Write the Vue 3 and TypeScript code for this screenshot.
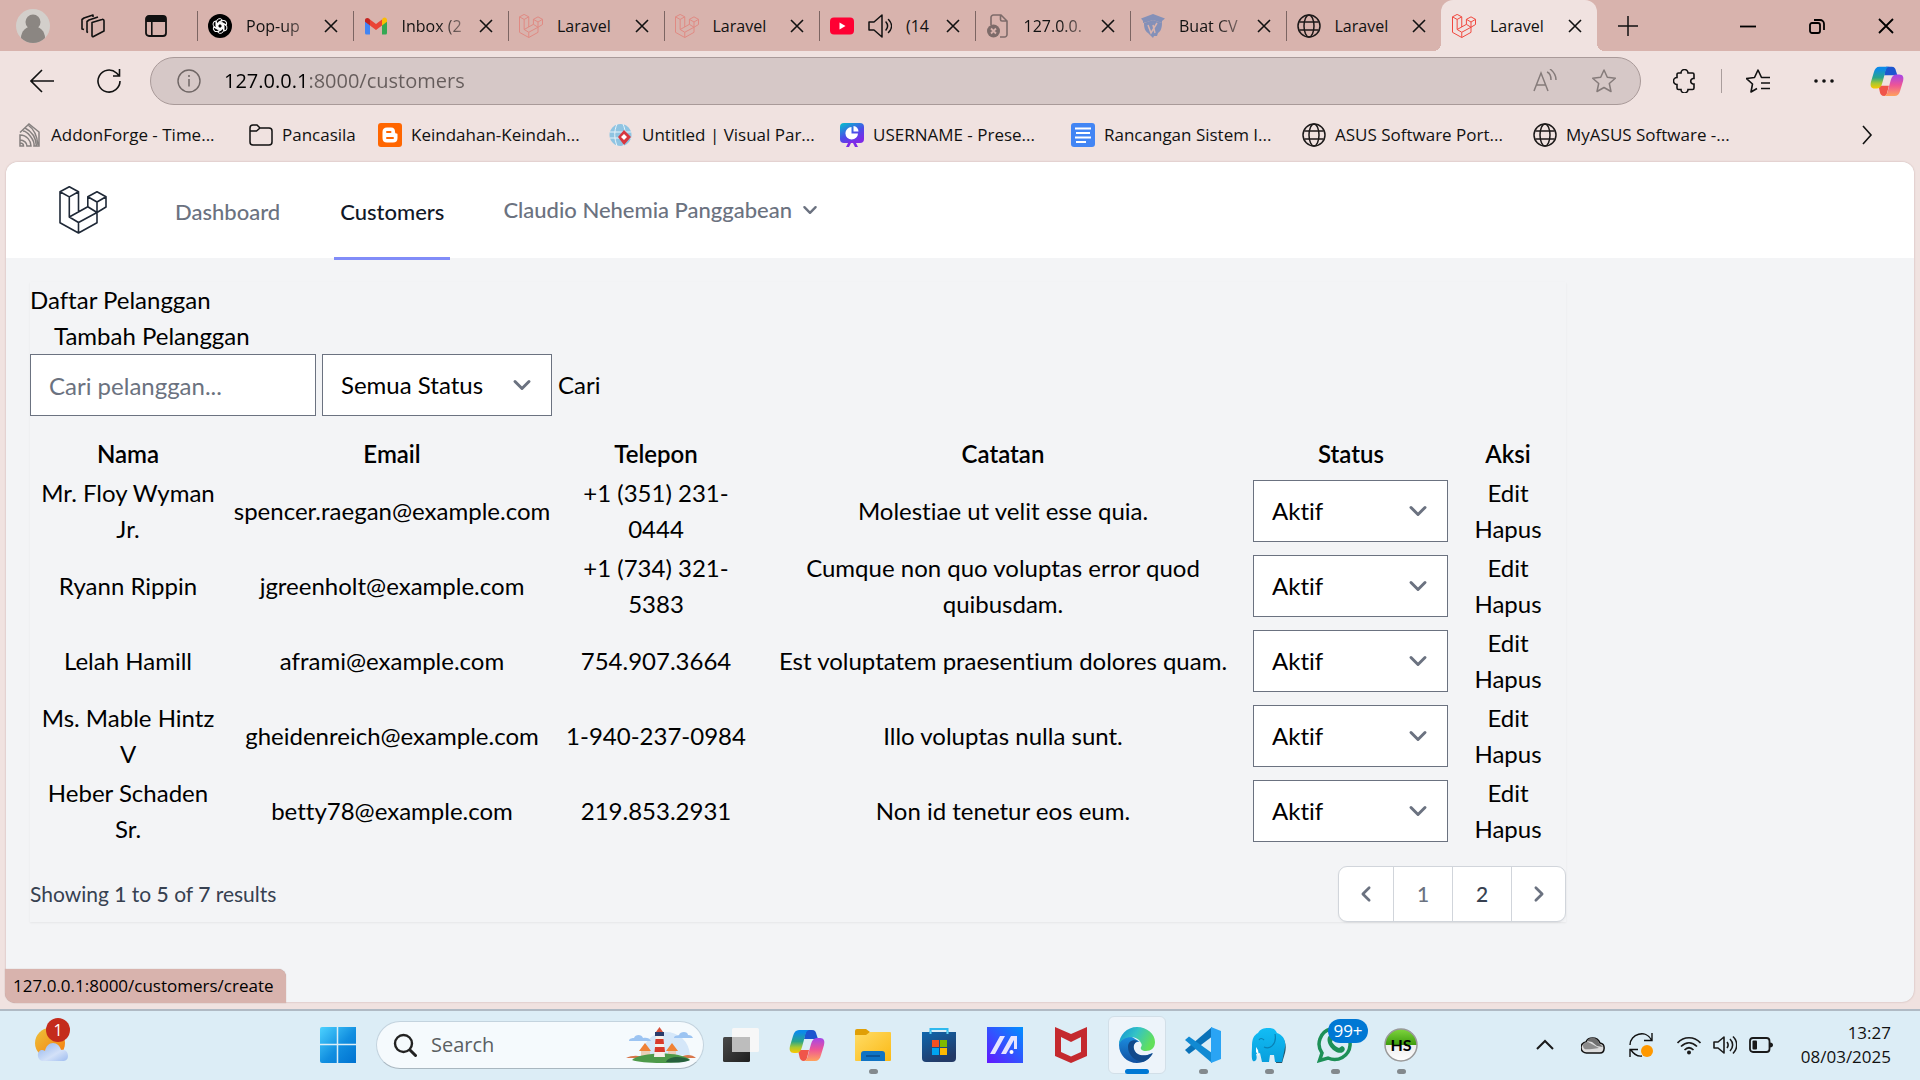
<script setup lang="ts">
import { ref } from 'vue'

interface Tab { icon: string; title: string; fade?: boolean; sound?: boolean; active?: boolean; dim?: boolean }
interface Bookmark { icon: string; title: string; folder?: boolean }
interface Customer { id: number; name: string; email: string; phone: string; note: string; status: string }
interface TaskApp { icon: string; name: string; running?: boolean; active?: boolean; badge?: string }

const tabs: Tab[] = [
  { icon: 'chatgpt', title: 'Pop-up', fade: true },
  { icon: 'gmail', title: 'Inbox (2', fade: true },
  { icon: 'laravel', title: 'Laravel', dim: true },
  { icon: 'laravel', title: 'Laravel', dim: true },
  { icon: 'youtube', title: '(14', sound: true },
  { icon: 'broken', title: '127.0.0.', fade: true },
  { icon: 'cv', title: 'Buat CV', fade: true },
  { icon: 'globe', title: 'Laravel' },
  { icon: 'laravel', title: 'Laravel', active: true },
]

const bookmarks: Bookmark[] = [
  { icon: 'addon', title: 'AddonForge - Time...' },
  { icon: 'folder', title: 'Pancasila', folder: true },
  { icon: 'blogger', title: 'Keindahan-Keindah...' },
  { icon: 'paradigm', title: 'Untitled | Visual Par...' },
  { icon: 'slides', title: 'USERNAME - Prese...' },
  { icon: 'docs', title: 'Rancangan Sistem I...' },
  { icon: 'globe', title: 'ASUS Software Port...' },
  { icon: 'globe', title: 'MyASUS Software -...' },
]

const customers = ref<Customer[]>([
  { id: 1, name: 'Mr. Floy Wyman Jr.', email: 'spencer.raegan@example.com', phone: '+1 (351) 231-0444', note: 'Molestiae ut velit esse quia.', status: 'Aktif' },
  { id: 2, name: 'Ryann Rippin', email: 'jgreenholt@example.com', phone: '+1 (734) 321-5383', note: 'Cumque non quo voluptas error quod quibusdam.', status: 'Aktif' },
  { id: 3, name: 'Lelah Hamill', email: 'aframi@example.com', phone: '754.907.3664', note: 'Est voluptatem praesentium dolores quam.', status: 'Aktif' },
  { id: 4, name: 'Ms. Mable Hintz V', email: 'gheidenreich@example.com', phone: '1-940-237-0984', note: 'Illo voluptas nulla sunt.', status: 'Aktif' },
  { id: 5, name: 'Heber Schaden Sr.', email: 'betty78@example.com', phone: '219.853.2931', note: 'Non id tenetur eos eum.', status: 'Aktif' },
])

const apps: TaskApp[] = [
  { icon: 'taskview', name: 'Task view' },
  { icon: 'copilot', name: 'Copilot' },
  { icon: 'explorer', name: 'File Explorer', running: true },
  { icon: 'store', name: 'Microsoft Store' },
  { icon: 'myasus', name: 'MyASUS' },
  { icon: 'mcafee', name: 'McAfee' },
  { icon: 'edge', name: 'Microsoft Edge', active: true },
  { icon: 'vscode', name: 'Visual Studio Code', running: true },
  { icon: 'elephant', name: 'Laragon', running: true },
  { icon: 'whatsapp', name: 'WhatsApp', running: true, badge: '99+' },
  { icon: 'hs', name: 'HS', running: true },
]

const address = ref('127.0.0.1:8000/customers')
const query = ref('')
const filter = ref('')
const taskSearch = ref('')
</script>

<template>
  <div class="screen">
    <svg class="sprite" aria-hidden="true">
      <defs>
        <linearGradient id="g-win" x1="0" y1="0" x2="1" y2="1"><stop offset="0" stop-color="#4cd2ff" /><stop offset=".55" stop-color="#118ee0" /><stop offset="1" stop-color="#0072d0" /></linearGradient>
        <linearGradient id="g-cop1" x1="0" y1="0" x2="0" y2="1"><stop offset=".1" stop-color="#0c8be8" /><stop offset=".5" stop-color="#2aa58a" /><stop offset=".75" stop-color="#a6c832" /><stop offset="1" stop-color="#fbc800" /></linearGradient>
        <linearGradient id="g-cop2" x1="0" y1="0" x2="0" y2="1"><stop offset="0" stop-color="#a445ea" /><stop offset=".5" stop-color="#ee5596" /><stop offset="1" stop-color="#ffa35c" /></linearGradient>
        <linearGradient id="g-fold" x1="0" y1="0" x2="1" y2="1"><stop offset="0" stop-color="#ffdc66" /><stop offset="1" stop-color="#fbb915" /></linearGradient>
        <linearGradient id="g-store" x1="0" y1="0" x2=".5" y2="1"><stop offset="0" stop-color="#0e66ae" /><stop offset="1" stop-color="#233a66" /></linearGradient>
        <linearGradient id="g-asus" x1="0" y1="1" x2="1" y2="0"><stop offset="0" stop-color="#6317ff" /><stop offset="1" stop-color="#0090ff" /></linearGradient>
        <linearGradient id="g-edge" x1="0" y1="0" x2="1" y2=".4"><stop offset="0" stop-color="#0f8fd5" /><stop offset=".5" stop-color="#34c3c6" /><stop offset="1" stop-color="#62e05b" /></linearGradient>
        <linearGradient id="g-edge2" x1="0" y1="0" x2="0" y2="1"><stop offset="0" stop-color="#1b8de0" /><stop offset="1" stop-color="#1150a0" /></linearGradient>
        <linearGradient id="g-ele" x1="0" y1="0" x2="0" y2="1"><stop offset="0" stop-color="#12bdf5" /><stop offset="1" stop-color="#089fdd" /></linearGradient>
        <linearGradient id="g-hs" x1="0" y1="0" x2="0" y2="1"><stop offset="0" stop-color="#7fd53f" /><stop offset=".5" stop-color="#3d9c0c" /><stop offset=".5" stop-color="#ececec" /><stop offset="1" stop-color="#fff" /></linearGradient>
        <linearGradient id="g-sun" x1="0" y1="0" x2="1" y2="1"><stop offset="0" stop-color="#edc23a" /><stop offset="1" stop-color="#f67a0c" /></linearGradient>
        <linearGradient id="g-cloud" x1="0" y1="0" x2="1" y2="1"><stop offset="0" stop-color="#8fb2ec" /><stop offset=".6" stop-color="#d3e1f8" /><stop offset="1" stop-color="#9ebcf0" /></linearGradient>
        <linearGradient id="g-slides" x1="0" y1="0" x2=".6" y2="1"><stop offset="0" stop-color="#00c4cc" /><stop offset=".6" stop-color="#4a4ee8" /><stop offset="1" stop-color="#7d2ae7" /></linearGradient>
        <linearGradient id="g-tv" x1="0" y1="0" x2="1" y2="1"><stop offset="0" stop-color="#4a4a4a" /><stop offset="1" stop-color="#1f1f1f" /></linearGradient>
      </defs>

      <symbol id="i-laravel" viewBox="0 0 48 48"><path fill="none" stroke="currentColor" stroke-linejoin="round" d="M1 5.7 10.3.8l9.2 4.9-9.2 5.2zV36.7L19.5 47 38 36.7V26.5M10.3 10.9V31l9.2 5.500V47M19.5 5.7V26M10.3 31l18.500-10.300 9.200 5.800-18.500 10M28.8 10.7 38 5.7l9 5-9 5.300zv10M47 10.7V21l-9 5.500V16" /></symbol>
      <symbol id="i-chatgpt" viewBox="0 0 24 24"><circle cx="12" cy="12" r="12" /><g fill="none" stroke="#fff" stroke-width="1"><path v-for="n in 6" :key="n" :transform="`rotate(${n * 60} 12 12)`" d="M8.500 13.800V7.500a3.200 3.200 0 0 1 5.800-1.500L10 8.500v4.800M12 8.900l2.700 1.500v3.200" /></g></symbol>
      <symbol id="i-gmail" viewBox="0 0 24 24"><path fill="#4285f4" d="M1 6.500V19a1.500 1.500 0 0 0 1.500 1.500H6v-10z" /><path fill="#34a853" d="M18 10.500v10h3.500A1.500 1.500 0 0 0 23 19V6.500z" /><path fill="#fbbc04" d="M18 5.500v6l5-3.800V6c0-2.500-2.500-3.300-4-2z" /><path fill="#ea4335" d="M6 11.500v-6l6 4.500 6-4.500v6L12 16z" /><path fill="#c5221f" d="M1 6v1.700l5 3.800v-6L5 4.500C3.500 3.300 1 4 1 6z" /></symbol>
      <symbol id="i-youtube" viewBox="0 0 24 24"><rect y="3.500" width="24" height="17" rx="4" fill="#f03" /><path fill="#fff" d="m9.500 8.500 6 3.500-6 3.500z" /></symbol>
      <symbol id="i-broken" viewBox="0 0 24 24"><g fill="none" stroke="#7d6b69" stroke-width="1.600"><path d="M5 11V3.500A2.500 2.500 0 0 1 7.500 1H15l6 6v13.500a2.500 2.500 0 0 1-2.500 2.500H14M14.500 1v4.500A1.500 1.500 0 0 0 16 7h5" /></g><circle cx="7.500" cy="17" r="6.500" fill="#7d6b69" /><path stroke="#d8b3ad" stroke-width="1.800" d="m5 14.500 5 5m0-5-5 5" /></symbol>
      <symbol id="i-cv" viewBox="0 0 24 24"><g fill="#8490b8"><path d="M12 0 24 4.500 21 7v2l-3-1-6-2-6 2-4 1V7L0 4.500z" /><path d="M3 9l9-3 9 3c0 6-2 9-4 10l-1 3h-3l-1 2-2-2-3-3c-3-2-4-5-4-10z" /></g><path d="m7 11 3 8 6-10M12 11l2 8" stroke="#d8b3ad" stroke-width="1.500" fill="none" /></symbol>
      <symbol id="i-globe" viewBox="0 0 24 24"><g fill="none" stroke="#1c1919" stroke-width="1.500"><circle cx="12" cy="12" r="11" /><ellipse cx="12" cy="12" rx="5" ry="11" /><path d="M2.300 8h19.400M2.300 16h19.400" /></g></symbol>
      <symbol id="i-addon" viewBox="0 0 24 24"><g fill="none" stroke="#85807f" stroke-width="1.500"><path d="M2 9.500 11 1l10 8v14h-5C17 17 9 8 5 8M2 12c7 0 11 6 11 11H9c0-3-3-6-7-6zM2 17v6h3.500c0-2-1-3-3.500-3M7 5c8 4 11 10 11.500 18M10 2c6 4 9 10 10 20" /></g></symbol>
      <symbol id="i-folder" viewBox="0 0 24 24"><path fill="none" stroke="#111" stroke-width="1.500" d="M1 5a3 3 0 0 1 3-3h4l3 3h9a3 3 0 0 1 3 3v11a3 3 0 0 1-3 3H4a3 3 0 0 1-3-3zm0 3h6.500L11 5" /></symbol>
      <symbol id="i-blogger" viewBox="0 0 24 24"><rect width="24" height="24" rx="3" fill="#ff6600" /><path fill="#fff" d="M9 4.500h4c3 0 4 2 4 4 0 1.500.5 2 1.500 2s1 .5 1 1.500v3c0 3-1.500 4.500-4.500 4.500H9c-3 0-4.500-1.500-4.500-4.500V9C4.500 6 6 4.500 9 4.500z" /><path stroke="#ff6600" stroke-width="2" stroke-linecap="round" d="M9 9h3.500M9 15h6" /></symbol>
      <symbol id="i-paradigm" viewBox="0 0 24 24"><circle cx="11.500" cy="12" r="11" fill="#8fc4e2" /><path fill="none" stroke="#e7f3fa" d="M1 9h21M1 15h21M8 1c-3 7-3 14 0 22M14 1c3 7 3 14 0 22" /><path fill="#d7373f" d="m15 7 7 7-7 8-6-8z" /><path fill="#fff" d="m15 11 3 3-3 3-3-3z" /></symbol>
      <symbol id="i-slides" viewBox="0 0 24 24"><rect width="24" height="20" rx="4" fill="url(#g-slides)" /><path d="m9 18-3 6h3l2-4h2l2 4h3l-3-6z" fill="#7d2ae7" /><path fill="#fff" d="M11.500 4v6.500H18A6.300 6.300 0 1 1 11.500 4z" /><path fill="#fff" d="M13.500 3a5.500 5.500 0 0 1 5 5.500h-5z" /></symbol>
      <symbol id="i-docs" viewBox="0 0 24 24"><rect width="24" height="24" rx="3" fill="#4285f4" /><path stroke="#fff" stroke-width="2.200" d="M4 5.500h16M5 10h14M4 14.500h16M5 19h10" /></symbol>
      <symbol id="i-speaker" viewBox="0 0 24 24"><path fill="none" stroke="currentColor" stroke-width="1.500" stroke-linejoin="round" stroke-linecap="round" d="M1 8v8h5l8 7V1L6 8zM18 8c2 2.500 2 5.500 0 8M20.500 5.500c4 4 4 9 0 13" /></symbol>
      <symbol id="i-close" viewBox="0 0 16 16"><path fill="none" stroke="#111" stroke-width="1.600" d="m2 2 12 12M14 2 2 14" /></symbol>
      <symbol id="i-chevron" viewBox="0 0 20 20"><path fill="none" stroke="currentColor" stroke-linecap="round" stroke-linejoin="round" d="m3 6.500 7 7 7-7" /></symbol>

      <symbol id="i-copilot" viewBox="0 0 36 32"><path fill="#1d55cf" d="M17 1h6c3 0 4 2 4.500 4.500L29 10H15z" /><path fill="#f0554a" d="M9 21h11l-2 8c-.5 2-2 3-3 3-3 0-4-2-4.500-4z" /><path fill="url(#g-cop1)" d="M10 1h11c-3 0-4 2-5 6l-3 11c-1 4-3 6-6 6H5c-4 0-5-3-4-7L4 7c1-4 3-6 6-6z" /><path fill="url(#g-cop2)" d="M26 32H14c3 0 4-2 5-6l3-11c1-4 3-6 6-6h3c4 0 5 3 4 7l-3 10c-1 4-3 6-6 6z" /></symbol>
      <symbol id="i-taskview" viewBox="0 0 36 36"><rect y="10" width="27" height="25" rx="1.500" fill="url(#g-tv)" /><rect x="9" y="1" width="27" height="24" rx="1.500" fill="#f7f7f7" /><path fill="#bdbdbd" d="M9 10h18v15H9z" /></symbol>
      <symbol id="i-explorer" viewBox="0 0 36 36"><path fill="#e09f06" d="M0 4a2 2 0 0 1 2-2h9l4 3-4 6H0z" /><path fill="url(#g-fold)" d="M0 8h11l4-3h20a1 1 0 0 1 1 1v27a1 1 0 0 1-1 1H1a1 1 0 0 1-1-1z" /><path fill="#0f73c4" d="M6 34V27a3 3 0 0 1 3-3h18a3 3 0 0 1 3 3v7z" /><path stroke="#0b4a8a" stroke-width="1.500" d="M11 29h14" /></symbol>
      <symbol id="i-store" viewBox="0 0 36 36"><path fill="none" stroke="#2fb9ee" stroke-width="2" d="M9.500 8V2h17v6" /><path fill="url(#g-store)" d="M1 5h34v26a4 4 0 0 1-4 4H5a4 4 0 0 1-4-4z" /><path stroke="#5fd3f6" stroke-width="2" d="M9.500 4v3m17-3v3" /><path fill="#f25022" d="M11 13h7v7h-7z" /><path fill="#7fba00" d="M19 13h7v7h-7z" /><path fill="#00a4ef" d="M11 21h7v7h-7z" /><path fill="#ffb900" d="M19 21h7v7h-7z" /></symbol>
      <symbol id="i-myasus" viewBox="0 0 36 36"><path fill="url(#g-asus)" d="M0 0h36v36H0z" /><path fill="#e6e4ff" d="M13 9h5L8 27H3zM24 9h6v13h-3V13l-8 14h-5z" /><circle cx="24.500" cy="25" r="2" fill="#fff" /></symbol>
      <symbol id="i-mcafee" viewBox="0 0 36 36"><path fill="#c4292e" d="m2 0 16 7 16-7v29l-16 7-16-7zM8 10v15l10 4.500L28 25V10l-10 5z" fill-rule="evenodd" /></symbol>
      <symbol id="i-edge" viewBox="0 0 36 36"><path fill="url(#g-edge2)" d="M0 18C0 10 7 9 13 10l8 5c-5-1-8 3-6 8 2 6 10 8 18 3-2 6-8 10-15 10C8 36 0 28 0 18z" /><path fill="#114a8b" d="M9 20c0 8 7 14 14 15 5-1 9-5 11-9-8 4-17 3-19-4-1-4 1-7 4-8-6-2-10 1-10 6z" /><path fill="url(#g-edge)" d="M0 18C0 8 8 0 18 0s18 7 18 15c0 6-4 9-9 9-4 0-6-2-5-4 1-1 1-3 0-4C19 8 3 8 0 18z" /></symbol>
      <symbol id="i-vscode" viewBox="0 0 36 36"><path fill="#0a72b8" d="m27 0-.5 10L4 27 0 23z" /><path fill="#118ad3" d="M4 9.500 27 26v10L0 13z" /><path fill="#2aa4f4" d="m26 0 10 4v28l-10 4z" /></symbol>
      <symbol id="i-elephant" viewBox="0 0 36 36"><path fill="#26566a" d="M28 9c6 2 8 9 6 17l-3 10h-6z" /><path fill="url(#g-ele)" d="M1 18c0-6 2-10 6-12 2-4 6-5 10-5 5 0 7 1 9 5 6 2 9 7 8 14l-3 15h-7l-1-7h-4l-1 7h-7l-2-9-4 1c2 6-1 8-3 7-2-3-1-8-1-16z" /><path fill="none" stroke="#0981b5" stroke-width="1.200" d="M8 13c1-2 3-2 5 0M13 20c6 3 13-3 11-13" /><path fill="#fff" d="m5 20 2 3 1 6-3-4z" /></symbol>
      <symbol id="i-whatsapp" viewBox="0 0 36 36"><path fill="none" stroke="#1d9057" stroke-width="3.500" d="M2.500 33.500 5 26a15.500 15.500 0 1 1 6 5z" /><path fill="#1d9057" d="M11 10c2-3 5-1 5 2l-1 3c2 3 4 5 7 6l3-2c3 1 4 4 1 6-6 4-18-7-15-15z" /></symbol>
      <symbol id="i-hs" viewBox="0 0 36 36"><circle cx="18" cy="18" r="16" fill="url(#g-hs)" stroke="#999" stroke-width="1.500" /></symbol>
    </svg>

    <header class="browser-top">
      <div class="tabstrip">
        <button class="plain profile" aria-label="Profile"><svg viewBox="0 0 34 34" width="34" height="34"><circle cx="17" cy="17" r="17" fill="#d3cfcb" /><circle cx="17" cy="13" r="7.500" fill="#8b8682" /><path d="M5 29a12 12 0 0 1 24 0 17 17 0 0 1-24 0z" fill="#8b8682" /></svg></button>
        <button class="plain workspaces" aria-label="Workspaces"><svg viewBox="0 0 24 24" width="24" height="24" fill="none" stroke="#111" stroke-width="1.600" stroke-linejoin="round"><path d="M11 8.500 21 5.500a1.500 1.500 0 0 1 2 1.500v10l-10.500 5.500a1 1 0 0 1-1.500-1z M7 18.500l-1-.5V7.500L8 6l9-3M3 15.500 1 15V5.500L3 4l9-3v2" /></svg></button>
        <button class="plain tabmenu" aria-label="Tab actions"><svg viewBox="0 0 22 22" width="22" height="22"><rect x="1" y="1" width="20" height="20" rx="3" fill="none" stroke="#111" stroke-width="1.800" /><path d="M1 2h20v5H1zM6 7h1.600v14H6z" fill="#111" /></svg></button>
        <div class="tabs">
          <div v-for="(t, i) in tabs" :key="i" class="tab" :class="{ active: t.active }">
            <svg class="i24" :class="{ red: t.icon === 'laravel', dim: t.dim }"><use :href="'#i-' + t.icon" /></svg>
            <svg v-if="t.sound" class="i24 sound"><use href="#i-speaker" /></svg>
            <span class="tab-title" :class="{ fade: t.fade }">{{ t.title }}</span>
            <button class="plain" :aria-label="'Close ' + t.title"><svg class="i16"><use href="#i-close" /></svg></button>
          </div>
        </div>
        <button class="plain newtab" aria-label="New tab"><svg viewBox="0 0 22 22" width="22" height="22"><path d="M11 1v20M1 11h20" stroke="#111" stroke-width="1.500" /></svg></button>
        <div class="window-buttons">
          <button class="plain" aria-label="Minimize"><svg viewBox="0 0 16 16" width="16" height="16"><path d="M0 8.500h16" stroke="#000" stroke-width="1.800" /></svg></button>
          <button class="plain" aria-label="Restore"><svg viewBox="0 0 16 16" width="16" height="16" fill="none" stroke="#000" stroke-width="1.800"><rect x="1" y="5" width="10" height="10" rx="2" /><path d="M5 2h6a4 4 0 0 1 4 4v6" /></svg></button>
          <button class="plain" aria-label="Close window"><svg viewBox="0 0 16 16" width="16" height="16"><path d="m1 1 14 14M15 1 1 15" stroke="#000" stroke-width="1.800" /></svg></button>
        </div>
      </div>

      <div class="toolbar">
        <button class="plain tool" aria-label="Back"><svg viewBox="0 0 24 24" width="24" height="24"><path d="M24 12H1M12 1 1 12l11 11" fill="none" stroke="#111" stroke-width="1.600" /></svg></button>
        <button class="plain tool" aria-label="Refresh"><svg viewBox="0 0 24 24" width="24" height="24"><path d="M23 12a11 11 0 1 1-3.500-8L22 6.500M22.500 0v7H16" fill="none" stroke="#111" stroke-width="1.600" /></svg></button>
        <div class="omnibox">
          <svg viewBox="0 0 24 24" width="24" height="24"><circle cx="12" cy="12" r="11" fill="none" stroke="#6f6665" stroke-width="1.400" /><path d="M12 10v7.500M12 6v2" stroke="#6f6665" stroke-width="1.500" /></svg>
          <input v-model="address" class="address" type="text" aria-label="Address" />
          <button class="plain" aria-label="Read aloud"><svg viewBox="0 0 24 24" width="24" height="24" fill="none" stroke="#857b7a" stroke-width="1.500"><path d="M1 22 8 4l7 18M3.500 16h9M14 3c3 1 4 4 4 8M17 0c4 3 6 7 6 11" /></svg></button>
          <button class="plain" aria-label="Add to favorites"><svg viewBox="0 0 24 24" width="24" height="24"><path d="m12 1 3.300 7.300 8 .9-6 5.300 1.700 8L12 18.500 5 22.500l1.700-8-6-5.300 8-.9z" fill="none" stroke="#857b7a" stroke-width="1.500" stroke-linejoin="round" /></svg></button>
        </div>
        <div class="tools">
          <button class="plain" aria-label="Extensions"><svg viewBox="0 0 24 24" width="24" height="24"><path d="M8 4a3.500 3.500 0 0 1 7 0h4.500A1.500 1.500 0 0 1 21 5.500V9.500h-1a2.800 2.800 0 0 0 0 5.500h1v4a1.500 1.500 0 0 1-1.500 1.500H15a3.500 3.500 0 0 1-7 0H5.500A1.500 1.500 0 0 1 4 19v-3.500a3.500 3.500 0 0 1 0-7v-3A1.500 1.500 0 0 1 5.500 4z" fill="none" stroke="#111" stroke-width="1.600" /></svg></button>
          <span class="divider"></span>
          <button class="plain" aria-label="Favorites"><svg viewBox="0 0 24 24" width="24" height="24" fill="none" stroke="#111" stroke-width="1.600" stroke-linejoin="round"><path d="M24 8.500h-8.500L12 1 8.500 8.500l-8 1 6 5.500L5 23l6-3.500M15 14h9M15 19.500h9" /></svg></button>
          <button class="plain" aria-label="Settings and more"><svg viewBox="0 0 24 24" width="24" height="24" fill="#111"><circle cx="4" cy="12" r="1.800" /><circle cx="12" cy="12" r="1.800" /><circle cx="20" cy="12" r="1.800" /></svg></button>
          <button class="plain" aria-label="Copilot"><svg width="34" height="32"><use href="#i-copilot" /></svg></button>
        </div>
      </div>

      <nav class="bookmarks" aria-label="Favorites bar">
        <a v-for="b in bookmarks" :key="b.title" href="#" class="bookmark" :class="{ folder: b.folder }">
          <svg class="i24"><use :href="'#i-' + b.icon" /></svg><span>{{ b.title }}</span>
        </a>
        <button class="plain more" aria-label="More favorites"><svg viewBox="0 0 12 20" width="12" height="20"><path d="m2 1 8 9-8 9" fill="none" stroke="#111" stroke-width="1.600" /></svg></button>
      </nav>
    </header>

    <div class="viewport">
      <div class="page">
        <nav class="site-nav">
          <a href="#" class="brand" aria-label="Home"><svg width="48" height="48"><use href="#i-laravel" /></svg></a>
          <a href="#" class="nav-link">Dashboard</a>
          <a href="#" class="nav-link selected">Customers</a>
          <button class="plain user">Claudio Nehemia Panggabean <svg class="user-chevron"><use href="#i-chevron" /></svg></button>
        </nav>

        <main class="content">
          <h1>Daftar Pelanggan</h1>
          <a href="#" class="add">Tambah Pelanggan</a>
          <form class="filters" @submit.prevent>
            <input v-model="query" type="text" class="field" placeholder="Cari pelanggan..." aria-label="Cari pelanggan" />
            <span class="select-wrap filter-select">
              <select v-model="filter" class="field" aria-label="Semua Status"><option value="">Semua Status</option><option>Aktif</option></select>
              <svg><use href="#i-chevron" /></svg>
            </span>
            <button class="plain">Cari</button>
          </form>

          <table>
            <colgroup><col class="c-name" /><col class="c-email" /><col class="c-phone" /><col /><col class="c-status" /><col class="c-action" /></colgroup>
            <thead><tr><th>Nama</th><th>Email</th><th>Telepon</th><th>Catatan</th><th>Status</th><th>Aksi</th></tr></thead>
            <tbody>
              <tr v-for="c in customers" :key="c.id">
                <td class="narrow">{{ c.name }}</td>
                <td>{{ c.email }}</td>
                <td class="narrow">{{ c.phone }}</td>
                <td>{{ c.note }}</td>
                <td>
                  <span class="select-wrap">
                    <select v-model="c.status" class="field" :aria-label="'Status ' + c.name"><option>Aktif</option></select>
                    <svg><use href="#i-chevron" /></svg>
                  </span>
                </td>
                <td><a href="#">Edit</a><button class="plain delete">Hapus</button></td>
              </tr>
            </tbody>
          </table>

          <div class="pager">
            <p>Showing <b>1</b> to <b>5</b> of <b>7</b> results</p>
            <nav class="pages" aria-label="Pagination">
              <a href="#" class="arrow prev" aria-label="Previous"><svg><use href="#i-chevron" /></svg></a>
              <a href="#" class="now">1</a>
              <a href="#">2</a>
              <a href="#" class="arrow next" aria-label="Next"><svg><use href="#i-chevron" /></svg></a>
            </nav>
          </div>
        </main>
      </div>
      <div class="link-hint">127.0.0.1:8000/customers/create</div>
    </div>

    <footer class="taskbar">
      <button class="plain weather" aria-label="Weather">
        <svg viewBox="0 0 36 36" width="36" height="36"><circle cx="17" cy="16" r="15" fill="url(#g-sun)" /><path d="M9 34a6 6 0 0 1-1-11c2 0 3 0 4 1 1-5 4-8 8-8s7 3 8 7c5-1 7 3 7 6 0 4-3 5-5 5z" fill="url(#g-cloud)" /></svg>
        <span class="count">1</span>
      </button>
      <button class="plain start" aria-label="Start"><svg viewBox="0 0 36 36" width="36" height="36" fill="url(#g-win)"><path d="M2 0h34v36H2a2 2 0 0 1-2-2V2a2 2 0 0 1 2-2z" /><path d="M17.500 0v36M0 17.500h36" stroke="#dcedf6" stroke-width="1.500" /></svg></button>
      <label class="search">
        <svg viewBox="0 0 24 24" width="24" height="24"><circle cx="10.500" cy="10.500" r="8.500" fill="none" stroke="#222" stroke-width="2.400" /><path d="m17 17 5.500 5.500" stroke="#222" stroke-width="3" stroke-linecap="round" /></svg>
        <input v-model="taskSearch" type="text" placeholder="Search" aria-label="Search" />
        <svg viewBox="0 0 70 36" width="70" height="36">
          <path d="M16 30a22 22 0 1 1 48-2z" fill="#d5e7f9" />
          <path d="M3 14c0-3 4-3 5-3 1-4 8-4 9 0 3-1 7 0 8 3zM48 11c0-3 4-2 5-3 1-4 9-4 9 0 3 0 4 1 5 3z" fill="#9cc4f2" />
          <path d="M0 31c6-3 14-3 18 0zM54 31c4-4 12-4 16 0z" fill="#d8764a" />
          <path d="M13 24l6-8 6 8zM40 24l6-8 6 8z" fill="#f08236" /><path d="M15 24h9v5h-9zM42 24h8v5h-8z" fill="#e9cfb9" />
          <path d="M6 33c8-8 48-9 58 0-10 4-48 4-58 0z" fill="#4e9a4a" /><path d="M40 35c2-5 14-7 24-2-6 3-16 3-24 2z" fill="#27613c" />
          <path d="M30 8h7l2 22H28z" fill="#f6efe9" /><path d="M29.500 12h8l.5 5h-9zM29 20h9.500l.5 5H28.500z" fill="#d8392b" /><path d="M29 5h9v4h-9z" fill="#2a3b6b" /><path d="m30 5 3.500-5L37 5z" fill="#d8513b" />
        </svg>
      </label>
      <button v-for="a in apps" :key="a.icon" class="plain app" :class="{ running: a.running, current: a.active }" :aria-label="a.name">
        <svg class="app-icon"><use :href="'#i-' + a.icon" /></svg>
        <span v-if="a.icon === 'hs'" class="hs-text">HS</span>
        <span v-if="a.badge" class="badge">{{ a.badge }}</span>
      </button>
      <div class="tray">
        <button class="plain" aria-label="Show hidden icons"><svg viewBox="0 0 24 24" width="24" height="24"><path d="m4 16 8-8 8 8" fill="none" stroke="#1a1a1a" stroke-width="2" /></svg></button>
        <button class="plain" aria-label="OneDrive"><svg viewBox="0 0 24 24" width="24" height="24"><path d="M6 20a5.500 5.500 0 0 1-1-11c2-5 11-6 14 1 6 1 5 10 0 10z" fill="#dcdcdc" stroke="#111" stroke-width="1.500" /><path d="M2 12c1-3 4-4 7-2l9 5-7 1c-4 0-9 2-9-4z" fill="#8c8c8c" /><path d="M6 8c3-5 10-4 12 2l4 4-6-1-5-4z" fill="#6f6f6f" /></svg></button>
        <button class="plain" aria-label="Update"><svg viewBox="0 0 24 24" width="24" height="24"><path d="M1 12C1 1 17-4 22.500 7M23 0v7.500h-8M13 23c-6 1-9-3-11-6M1 24v-7.500h8" fill="none" stroke="#111" stroke-width="1.400" /><circle cx="18" cy="18" r="6" fill="#ff9800" /></svg></button>
        <button class="plain status" aria-label="Network, volume and battery">
          <svg viewBox="0 0 24 24" width="24" height="24"><g fill="none" stroke="#1a1a1a" stroke-width="1.700"><path d="M.5 10C7 3 17 3 23.500 10M4 13.500c5-5 11-5 16 0M7.500 17c3-3 6-3 9 0" /></g><circle cx="12" cy="19.500" r="2" fill="#1a1a1a" /></svg>
          <svg viewBox="0 0 24 24" width="24" height="24" fill="none" stroke="#1a1a1a" stroke-width="1.600" stroke-linejoin="round"><path d="M1 9v6h4l6 5V4L5 9zM14 9c1.500 2 1.500 4 0 6M17 6c3.500 3.500 3.500 8.500 0 12M20 3.500c5 5 5 12 0 17" /></svg>
          <svg viewBox="0 0 24 24" width="24" height="24"><rect x="1" y="5" width="19.500" height="14" rx="3" fill="none" stroke="#1a1a1a" stroke-width="1.800" /><rect x="3.500" y="7.500" width="4.500" height="9" rx="1" fill="#1a1a1a" /><path d="M21 9.500c4 0 4 5 0 5z" fill="#1a1a1a" /></svg>
        </button>
        <time class="clock"><span>13:27</span><span>08/03/2025</span></time>
      </div>
    </footer>
  </div>
</template>

<style>
body { margin: 0; }
</style>

<style scoped>
* { box-sizing: border-box; }
.screen { display: flex; flex-direction: column; min-height: 100vh; background: #f0e2e0; font: 17px/24px "Open Sans", "Noto Sans", sans-serif; color: #111; }
.sprite { position: absolute; width: 0; height: 0; }
svg { display: block; flex: none; }
a { color: inherit; text-decoration: none; }
.plain { display: flex; align-items: center; justify-content: center; padding: 0; border: 0; background: none; font: inherit; color: inherit; }
.i24 { width: 24px; height: 24px; }
.i16 { width: 16px; height: 16px; }

.tabstrip { display: flex; align-items: center; height: 51px; background: #d8b3ad; font-size: 16px; }
.profile { margin-left: 16px; }
.workspaces { margin-left: 31px; }
.tabmenu { margin-left: 40px; }
.tabs { display: flex; flex: 0 1 1400px; min-width: 0; align-self: stretch; margin-left: 30px; }
.tab { position: relative; display: flex; flex: 1; align-items: center; min-width: 0; padding: 0 14px 0 11px; }
.tab::before { content: ""; position: absolute; left: 0; top: 11px; width: 1px; height: 30px; background: #7c6562; }
.tab .i24 { stroke-width: 2px; }
.tab .red { color: #f0483f; }
.tab .dim { color: #e08a83; }
.tab .sound { margin-left: 14px; color: #111; }
.tab-title { flex: 1; min-width: 0; margin: 0 2px 0 14px; overflow: hidden; white-space: nowrap; }
.tab-title.fade { margin-right: 6px; mask-image: linear-gradient(90deg, #000 50%, rgba(0, 0, 0, .2)); }
.tab.active { flex: none; width: 156px; background: #f0e2e0; border-radius: 12px 12px 0 0; }
.tab.active::before, .tab.active::after { top: auto; bottom: 0; width: 8px; height: 8px; }
.tab.active::before { left: -8px; background: radial-gradient(circle at 0 0, transparent 8px, #f0e2e0 8px); }
.tab.active::after { content: ""; position: absolute; right: -8px; background: radial-gradient(circle at 100% 0, transparent 8px, #f0e2e0 8px); }
.newtab { margin-left: 20px; }
.window-buttons { display: flex; margin-left: auto; }
.window-buttons .plain { width: 69px; height: 48px; }

.toolbar { display: flex; align-items: center; height: 60px; padding-left: 8px; }
.tool { width: 67px; height: 48px; }
.omnibox { display: flex; align-items: center; flex: 1; height: 48px; margin-left: 8px; padding: 0 24px 0 26px; gap: 35px; background: #d6c8c7; border: 1px solid #a99a99; border-radius: 24px; }
.address { flex: 1; min-width: 0; margin-left: -12px; padding: 0; border: 0; outline: 0; font: 20px/28px "Open Sans", "Noto Sans", sans-serif; color: transparent; background: linear-gradient(90deg, #000 83px, #655c5b 83px); background-clip: text; }
.tools { display: flex; align-items: center; padding-left: 32px; padding-right: 16px; }
.divider { width: 1px; height: 24px; margin: 0 24px; background: #a99d9c; }
.tools .plain + .plain { margin-left: 42px; }
.tools .plain:last-child { margin-left: 34px; }

.bookmarks { display: flex; align-items: center; gap: 30px; height: 48px; padding: 0 47px 0 18px; }
.bookmark { display: flex; align-items: center; gap: 9px; width: 201px; white-space: nowrap; }
.bookmark.folder { width: 99px; }
.more { margin-left: auto; }

.viewport { position: relative; display: flex; flex: 1; padding: 3px 6px 7px; }
.page { flex: 1; border-radius: 12px; overflow: hidden; background: #f3f4f6; box-shadow: 0 0 2px #c3a9a6; font: 24px/36px Lato, "Open Sans", sans-serif; font-variant-ligatures: none; color: #000; }
.site-nav { display: flex; height: 97px; padding-left: 53px; background: #fff; border-bottom: 1px solid #f3f4f6; font-size: 22px; line-height: 30px; font-weight: 500; color: #6b7280; }
.brand { align-self: center; margin-right: 62px; color: #1f2937; stroke-width: 1.600px; }
.nav-link { display: flex; align-items: center; height: 98px; padding: 4px 6px 0; margin-right: 48px; border-bottom: 3px solid transparent; z-index: 1; }
.nav-link.selected { color: #111827; border-color: #818cf8; }
.user { gap: 10px; padding-left: 5px; }
.user-chevron { width: 16px; height: 16px; stroke-width: 3px; }

.content { max-width: 1536px; margin: 23px 24px 0; box-shadow: 0 1px 2px rgba(0, 0, 0, .06); }
h1 { margin: 0; font: inherit; }
.add { display: block; width: max-content; margin-left: 24px; }
.filters { display: flex; gap: 6px; margin-bottom: 18px; }
.field { width: 100%; height: 62px; padding: 0 18px; border: 1px solid #6b7280; border-radius: 0; outline: 0; background: #fff; font: inherit; color: #000; appearance: none; }
.filters > .field { width: 286px; }
.field::placeholder { color: #6b7280; opacity: 1; }
.select-wrap { position: relative; display: block; margin-right: 1px; }
.filter-select { width: 230px; margin-right: 0; }
.select-wrap svg { position: absolute; right: 20px; top: 21px; width: 20px; height: 20px; color: #6b7280; stroke-width: 3px; pointer-events: none; }
table { width: 100%; table-layout: fixed; border-collapse: collapse; text-align: center; }
th { height: 39px; padding: 0; font-weight: 600; }
td { height: 75px; padding: 0 1px; }
td.narrow { padding: 0 6px; }
.c-name, .c-phone { width: 196px; }
.c-email { width: 332px; }
.c-status { width: 198px; }
.c-action { width: 116px; }
.delete { width: 100%; }
.pager { display: flex; justify-content: space-between; align-items: center; margin-top: 18px; font-size: 21px; line-height: 30px; color: #374151; }
.pager p { margin: 0; }
.pager b { font-weight: 500; }
.pages { display: flex; height: 56px; background: #fff; border: 1px solid #d1d5db; border-radius: 9px; box-shadow: 0 1px 2px rgba(0, 0, 0, .06); font-weight: 500; }
.pages a { display: flex; align-items: center; justify-content: center; width: 59px; }
.pages a + a { border-left: 1px solid #d1d5db; }
.pages .arrow { width: 54px; color: #6b7280; }
.pages .now { color: #6b7280; }
.arrow svg { width: 18px; height: 18px; stroke-width: 3px; }
.prev svg { transform: rotate(90deg); }
.next svg { transform: rotate(-90deg); }
.link-hint { position: absolute; left: 5px; bottom: 6px; height: 34px; padding: 0 12px 0 8px; line-height: 34px; background: #d8b3ad; border-radius: 0 8px 0 10px; box-shadow: 0 0 1px #a98f8c; white-space: nowrap; color: #000; }

.taskbar { display: flex; align-items: center; height: 71px; padding-bottom: 2px; border-top: 2px solid #b0bac4; background: #dcedf6; }
.weather { position: relative; margin-left: 31px; width: 40px; height: 40px; }
.count { position: absolute; left: 15px; top: -7px; width: 24px; height: 24px; border-radius: 12px; background: #c42b1c; color: #fff; font-size: 16px; }
.start { margin-left: 249px; }
.search { display: flex; align-items: center; width: 328px; height: 48px; margin: 0 4px 0 20px; padding: 0 7px 0 16px; border: 1px solid #c3d3de; border-bottom-color: #a9b7c0; border-radius: 24px; background: #f5fafd; }
.search input { flex: 1; min-width: 0; margin-left: 14px; padding: 0; border: 0; outline: 0; background: none; font: 20px/28px "Open Sans", "Noto Sans", sans-serif; }
.search input::placeholder { color: #5a5f62; opacity: 1; }
.app { position: relative; flex: none; width: 66px; height: 58px; }
.app.current::before { content: ""; position: absolute; left: 4px; right: 4px; top: 0; bottom: 0; border: 1px solid #d2dfe8; border-radius: 6px; background: #edf4fa; }
.app-icon { position: relative; width: 36px; height: 36px; }
.app.running::after, .app.current::after { content: ""; position: absolute; bottom: 0; left: 50%; width: 9px; height: 5px; margin-left: -4px; border-radius: 3px; background: #83898d; }
.app.current::after { width: 24px; margin-left: -12px; background: #0078d4; }
.hs-text { position: absolute; font: bold 16px/20px Lato, sans-serif; color: #000; }
.badge { position: absolute; left: 26px; top: 3px; width: 40px; height: 24px; border-radius: 12px; background: #0078d4; color: #fff; }
.tray { display: flex; align-items: center; gap: 24px; margin-left: auto; padding-right: 29px; }
.status { gap: 12px; }
.clock { display: flex; flex-direction: column; min-width: 94px; text-align: right; }
</style>
